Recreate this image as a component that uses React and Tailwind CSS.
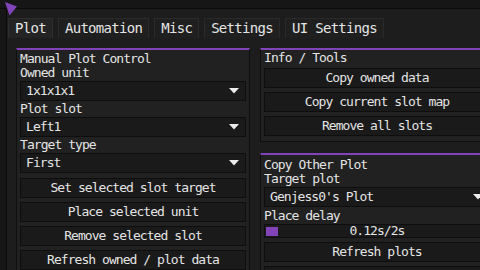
import React from "react";

const TABS = ["Plot", "Automation", "Misc", "Settings", "UI Settings"];

function Arrow() {
  return (
      <svg width="10" height="6" viewBox="0 0 10 6" className="shrink-0">
        <polygon points="0,0 10,0 5,5.5" fill="#ececec"/>
      </svg>
  );
}

function Label({children, className = ""}) {
  return <div className={`h-[14px] leading-[14px] whitespace-nowrap ${className}`}>{children}</div>;
}

function Combo({value, className = ""}) {
  return (
      <div className={`flex h-[20px] items-center justify-between border border-[#0e0e0e] bg-[#1a1a1a] pl-[5px] pr-[6px] ${className}`}>
        <span className="whitespace-nowrap">{value}</span>
        <Arrow/>
      </div>
  );
}

function Button({children, className = ""}) {
  return (
      <div className={`flex h-[20px] items-center justify-center border border-[#0e0e0e] bg-[#1a1a1a] whitespace-nowrap ${className}`}>
        {children}
      </div>
  );
}

function Panel({children, className = ""}) {
  return (
      <div className={`w-[234px] shrink-0 border-x border-b border-t-2 border-x-[#0f0f0f] border-b-[#0f0f0f] border-t-[#8242b8] bg-[#212121] px-[3px] ${className}`}>
        {children}
      </div>
  );
}

export default function App() {
  return (
      <div
          className="relative h-[270px] w-[480px] overflow-hidden bg-[#161616] text-[13px] tracking-[-0.95px] text-[#e4e4e4]"
          style={{fontFamily: '"DejaVu Sans Mono", "Liberation Mono", monospace'}}
      >
        <div className="h-[9px] border-b border-[#0a0a0a]"/>
        <div className="flex h-[261px]">
          <div className="w-[6px] shrink-0"/>
          <div className="min-w-0 flex-1 border-l border-[#0a0a0a] bg-[#1d1d1d] pt-[9px]">
            {/* tab bar */}
            <div className="flex gap-[5px] pl-[1px] text-[14px] tracking-[-0.7px]">
              {TABS.map((tab, i) => (
                  <div
                      key={tab}
                      className={`flex h-[20px] items-center whitespace-nowrap border border-b-0 px-[6px] ${
                          i === 0 ? "border-[#2e2e2e] bg-[#242424]" : "border-[#2a2a2a] bg-[#1f1f1f]"
                      }`}
                  >
                    {tab}
                  </div>
              ))}
            </div>

            <div className="mt-[10px] flex gap-[10px] pl-[9px]">
              {/* left column */}
              <Panel className="h-[240px] pt-[2px]">
                <Label>Manual Plot Control</Label>
                <Label>Owned unit</Label>
                <Combo value="1x1x1x1" className="mt-[1px]"/>
                <Label className="mt-[1px]">Plot slot</Label>
                <Combo value="Left1" className="mt-[1px]"/>
                <Label className="mt-[1px]">Target type</Label>
                <Combo value="First" className="mt-[1px]"/>
                <div className="mt-[5px] flex flex-col gap-[4px]">
                  <Button>Set selected slot target</Button>
                  <Button>Place selected unit</Button>
                  <Button>Remove selected slot</Button>
                  <Button>Refresh owned / plot data</Button>
                </div>
              </Panel>

              {/* right column */}
              <div className="flex flex-col gap-[11px]">
                <Panel className="pt-[1px] pb-[5px]">
                  <Label>Info / Tools</Label>
                  <div className="mt-[3px] flex flex-col gap-[4px]">
                    <Button>Copy owned data</Button>
                    <Button>Copy current slot map</Button>
                    <Button>Remove all slots</Button>
                  </div>
                </Panel>
                <Panel className="h-[140px] pt-[3px]">
                  <Label>Copy Other Plot</Label>
                  <Label>Target plot</Label>
                  <Combo value="Genjess0's Plot" className="mt-[1px]"/>
                  <Label className="mt-[2px]">Place delay</Label>
                  <div className="relative mt-[1px] flex h-[14px] items-center justify-center border border-[#0e0e0e] bg-[#1a1a1a]">
                    <div className="absolute left-[1px] top-[2px] h-[9px] w-[12px] bg-[#8242b8]"/>
                    <span>0.12s/2s</span>
                  </div>
                  <div className="mt-[4px] flex flex-col gap-[4px]">
                    <Button>Refresh plots</Button>
                    <Button/>
                  </div>
                </Panel>
              </div>
            </div>
          </div>
        </div>

        {/* collapse arrow overlay */}
        <svg className="absolute left-0 top-0" width="20" height="18" viewBox="0 0 20 18">
          <polygon points="5,2 17,6.5 9.5,15.5" fill="#8244ba"/>
        </svg>
      </div>
  );
}
